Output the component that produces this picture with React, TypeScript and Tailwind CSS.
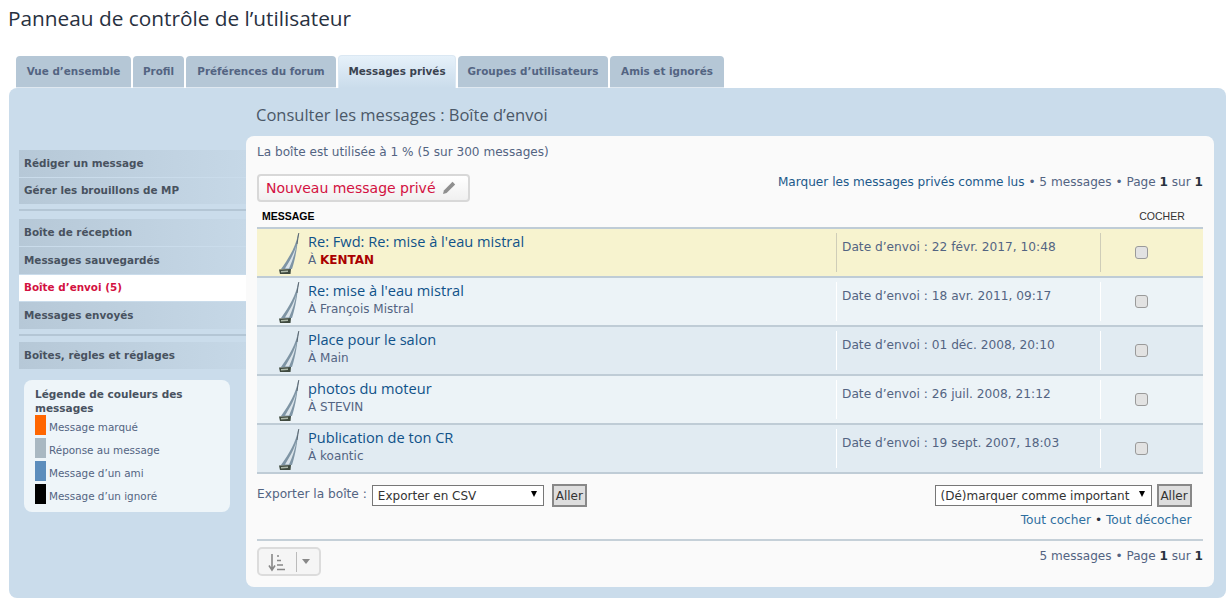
import React from "react";

const tabs = [
  { label: "Vue d’ensemble", width: "w-[115px]" },
  { label: "Profil", width: "w-[51px]" },
  { label: "Préférences du forum", width: "w-[150px]" },
  { label: "Messages privés", width: "w-[118px]", active: true },
  { label: "Groupes d’utilisateurs", width: "w-[150px]" },
  { label: "Amis et ignorés", width: "w-[114px]" },
];

const rows = [
  { title: "Re: Fwd: Re: mise à l'eau mistral", to: "KENTAN", date: "22 févr. 2017, 10:48", bg: "bg-[#f7f3cf]", marked: true },
  { title: "Re: mise à l'eau mistral", to: "François Mistral", date: "18 avr. 2011, 09:17", bg: "bg-[#ecf3f7]" },
  { title: "Place pour le salon", to: "Main", date: "01 déc. 2008, 20:10", bg: "bg-[#e1ebf2]" },
  { title: "photos du moteur", to: "STEVIN", date: "26 juil. 2008, 21:12", bg: "bg-[#ecf3f7]" },
  { title: "Publication de ton CR", to: "koantic", date: "19 sept. 2007, 18:03", bg: "bg-[#e1ebf2]" },
];

const legend = [
  { label: "Message marqué", color: "bg-[#ff6600]" },
  { label: "Réponse au message", color: "bg-[#a9b8c2]" },
  { label: "Message d’un ami", color: "bg-[#5c8dbc]" },
  { label: "Message d’un ignoré", color: "bg-black" },
];

const SideItem = ({ label, active }: { label: string; active?: boolean }) => (
  <a
    className={
      active
        ? "flex h-[26.7px] items-center bg-white pl-[5px] text-[10.4px] font-bold text-[#d31141]"
        : "flex h-[26.7px] items-center bg-gradient-to-r from-[#b6c8d7] to-[#c6d8e7] pl-[5px] text-[10.4px] font-bold text-[#48525f]"
    }
  >
    {label}
  </a>
);

const Boat = () => (
  <svg width="22" height="42" viewBox="0 0 22 42" className="shrink-0">
    <path d="M20.5 1 L20 1 C18.5 12 11 25 3 36 L14 36 C17.5 26 19.5 12 20.5 1Z" fill="#7f95a5" />
    <path d="M18.5 12 C16 21 11 29 7 35.5 L11 35.5 C14.5 28 17 20 18.5 12Z" fill="#dbe4ea" />
    <path d="M20.8 0 C20 4 19.7 7 19 11" stroke="#5a6670" strokeWidth="1" fill="none" />
    <path d="M1 36.5 L13 36 L12.5 41 L2 41Z" fill="#3f4a3f" />
    <path d="M3 38 L10 37.5 L10 39 L3 39.5Z" fill="#aeb9a9" />
  </svg>
);

const Rule = () => <div className="my-[5px] h-[2px] bg-[#b4c6d5]" />;

const Picker = ({ label, width, pad }: { label: string; width: string; pad: string }) => (
  <div className={`relative h-[21px] ${width}`}>
    <select className={`h-[21px] w-full appearance-none border border-[#777] bg-white text-[12px] text-[#333] ${pad}`}>
      <option>{label}</option>
    </select>
    <span className="pointer-events-none absolute right-[7px] top-[6px] h-0 w-0 border-x-[3.5px] border-t-[6px] border-x-transparent border-t-black" />
  </div>
);

const Go = () => <button className="h-[23px] w-[35px] border-2 border-[#888] bg-[#dedede] text-[12px] text-[#333]">Aller</button>;

export default function App() {
  return (
    <div className="h-[602px] w-[1228px] overflow-hidden bg-white text-[12px] text-[#536482] [font-family:'DejaVu_Sans',sans-serif]">
      <h2 className="pl-2 pt-[5px] text-[20.8px] leading-[26px] text-[#28313f] [font-family:'Open_Sans',sans-serif]">
        Panneau de contrôle de l’utilisateur
      </h2>

      {/* Tabs */}
      <div className="mt-[24px] flex h-[33px] items-end gap-[2px] pl-4">
        {tabs.map((t) => (
          <a
            key={t.label}
            className={
              t.active
                ? `flex h-[33px] items-center justify-center rounded-t-[4px] border-x border-t border-[#dbe8f3] bg-gradient-to-b from-[#e6f1fa] to-[#cadceb] text-[10.4px] font-bold text-[#3a4350] ${t.width}`
                : `flex h-[32px] items-center justify-center rounded-t-[4px] border-b border-[#dfe8f0] bg-[#b5c7d6] text-[10.4px] font-bold text-[#536482] ${t.width}`
            }
          >
            {t.label}
          </a>
        ))}
      </div>

      {/* Panel */}
      <div className="ml-[9px] flex h-[510px] w-[1217px] rounded-[8px] bg-[#cadceb]">
        {/* Sidebar */}
        <div className="w-[237px] shrink-0 pl-[10px] pt-[62px]">
          <div className="flex flex-col gap-px">
            <SideItem label="Rédiger un message" />
            <SideItem label="Gérer les brouillons de MP" />
          </div>
          <Rule />
          <div className="mt-[8px] flex flex-col gap-px">
            <SideItem label="Boîte de réception" />
            <SideItem label="Messages sauvegardés" />
            <SideItem label="Boîte d’envoi (5)" active />
            <SideItem label="Messages envoyés" />
          </div>
          <Rule />
          <div className="mt-[6px]">
            <SideItem label="Boîtes, règles et réglages" />
          </div>
          <div className="ml-[5px] mt-[11px] h-[132px] w-[206px] rounded-[8px] bg-[#eef5f9] pl-[11px] pt-[7px]">
            <div className="text-[10.5px] font-bold leading-[14px] text-[#48525f]">Légende de couleurs des messages</div>
            <div className="flex flex-col gap-[3px]">
              {legend.map((l) => (
                <div key={l.label} className="flex h-[20px] items-end gap-[3px] text-[10.4px] leading-[15px] text-[#536482]">
                  <span className={`h-[20px] w-[11px] ${l.color}`} />
                  <span>{l.label}</span>
                </div>
              ))}
            </div>
          </div>
        </div>

        {/* Main */}
        <div className="min-w-0 flex-1 pr-[12px]">
          <h3 className="pl-[10px] pt-[16px] text-[16.5px] leading-[22px] text-[#4a5868] [font-family:'Open_Sans',sans-serif]">
            Consulter les messages : Boîte d’envoi
          </h3>
          <div className="mt-[10px] h-[451px] rounded-[8px] bg-[#fafafa] px-[11px] pt-[8px]">
            <p className="text-[12.1px] leading-[16px] text-[#536482]">La boîte est utilisée à 1 % (5 sur 300 messages)</p>

            <div className="mt-[14px] flex h-[28px] items-start justify-between">
              <button className="flex h-[28px] items-center gap-[6px] rounded-[4px] border-2 border-[#d8d8d8] bg-gradient-to-b from-white to-[#f0f0f0] pl-[7px] pr-[12px] text-[14px] text-[#d31141]">
                Nouveau message privé
                <svg width="14" height="14" viewBox="0 0 14 14">
                  <path d="M10.5 0.8 L13.2 3.5 L4.6 12.1 L1 13 L1.9 9.4Z" fill="#8f8f8f" />
                </svg>
              </button>
              <div className="text-[12.1px] leading-[16px]">
                <a className="text-[#21598a]">Marquer les messages privés comme lus</a> • 5 messages • Page <b className="text-[#28313f]">1</b> sur <b className="text-[#28313f]">1</b>
              </div>
            </div>

            {/* Table head */}
            <div className="mt-[4px] flex h-[21px] items-center justify-between text-[10.5px] [font-family:'Liberation_Sans',sans-serif]">
              <span className="pl-[5px] font-bold text-black">MESSAGE</span>
              <span className="w-[82px] text-center text-[#333]">COCHER</span>
            </div>

            <div className="border-t-2 border-[#bfccd6]">
              {rows.map((r) => (
                <div key={r.title} className={`flex h-[49px] border-b-2 border-[#bfccd6] ${r.bg}`}>
                  <div className="flex w-[579px] shrink-0 items-start">
                    <div className="ml-[21px] mt-[4px] w-[30px]">
                      <Boat />
                    </div>
                    <div className="pt-[2px]">
                      <div className="text-[14.6px] font-medium leading-[20px] text-[#105289] [font-family:'Open_Sans',sans-serif]">{r.title}</div>
                      <div className="mt-px text-[12px] leading-[16px]">
                        À {r.marked ? <b className="text-[#aa0000]">{r.to}</b> : r.to}
                      </div>
                    </div>
                  </div>
                  <div className={`my-[4px] w-[265px] shrink-0 border-x pl-[5px] pt-[5.5px] text-[12.2px] leading-[16px] text-[#536482] ${r.marked ? "border-[#cfcdb8]" : "border-white"}`}>
                    Date d’envoi : {r.date}
                  </div>
                  <div className="flex flex-1 items-center justify-center pr-[22px]">
                    <input type="checkbox" className="h-[13px] w-[13px] appearance-none rounded-[3px] border border-[#9a9a9a] bg-[#e2e2e2]" />
                  </div>
                </div>
              ))}
            </div>

            {/* Actions */}
            <div className="mt-[10px] flex items-start justify-between">
              <div className="flex items-center text-[12.2px]">
                <span className="mr-[5px] pb-[3px]">Exporter la boîte :</span>
                <Picker label="Exporter en CSV" width="w-[172px]" pad="pl-[5px]" />
                <span className="ml-[8px]">
                  <Go />
                </span>
              </div>
              <div className="flex flex-col items-end pr-[11.5px]">
                <div className="flex items-center gap-[5px]">
                  <Picker label="(Dé)marquer comme important" width="w-[217px]" pad="pl-[5px]" />
                  <Go />
                </div>
                <div className="mt-[5px] text-[12.2px] leading-[16px] text-[#28313f]">
                  <a className="text-[#2f6f9f]">Tout cocher</a> • <a className="text-[#2f6f9f]">Tout décocher</a>
                </div>
              </div>
            </div>

            <div className="mt-[11px] flex items-start justify-between border-t-2 border-[#c5d0d8] pt-[7px]">
              <div className="mt-[-1px] flex h-[29px] w-[64px] items-center rounded-[5px] border-2 border-[#dcdcdc] bg-[#f5f5f5]">
                <svg width="34" height="20" viewBox="0 0 34 20" className="ml-[1px]">
                  <path d="M12 2 V17 M9 13.5 L12 18 L15 13.5" stroke="#888" strokeWidth="1.6" fill="none" />
                  <path d="M17 4 H19 M17 8.5 H21 M17 13 H23 M17 17.5 H25" stroke="#888" strokeWidth="1.5" />
                </svg>
                <span className="ml-[2px] h-[20px] w-px bg-[#bbb]" />
                <span className="ml-[5px] h-0 w-0 border-x-[4.5px] border-t-[5px] border-x-transparent border-t-[#888]" />
              </div>
              <div className="text-[12.1px] leading-[16px]">
                5 messages • Page <b className="text-[#28313f]">1</b> sur <b className="text-[#28313f]">1</b>
              </div>
            </div>
          </div>
        </div>
      </div>
    </div>
  );
}
